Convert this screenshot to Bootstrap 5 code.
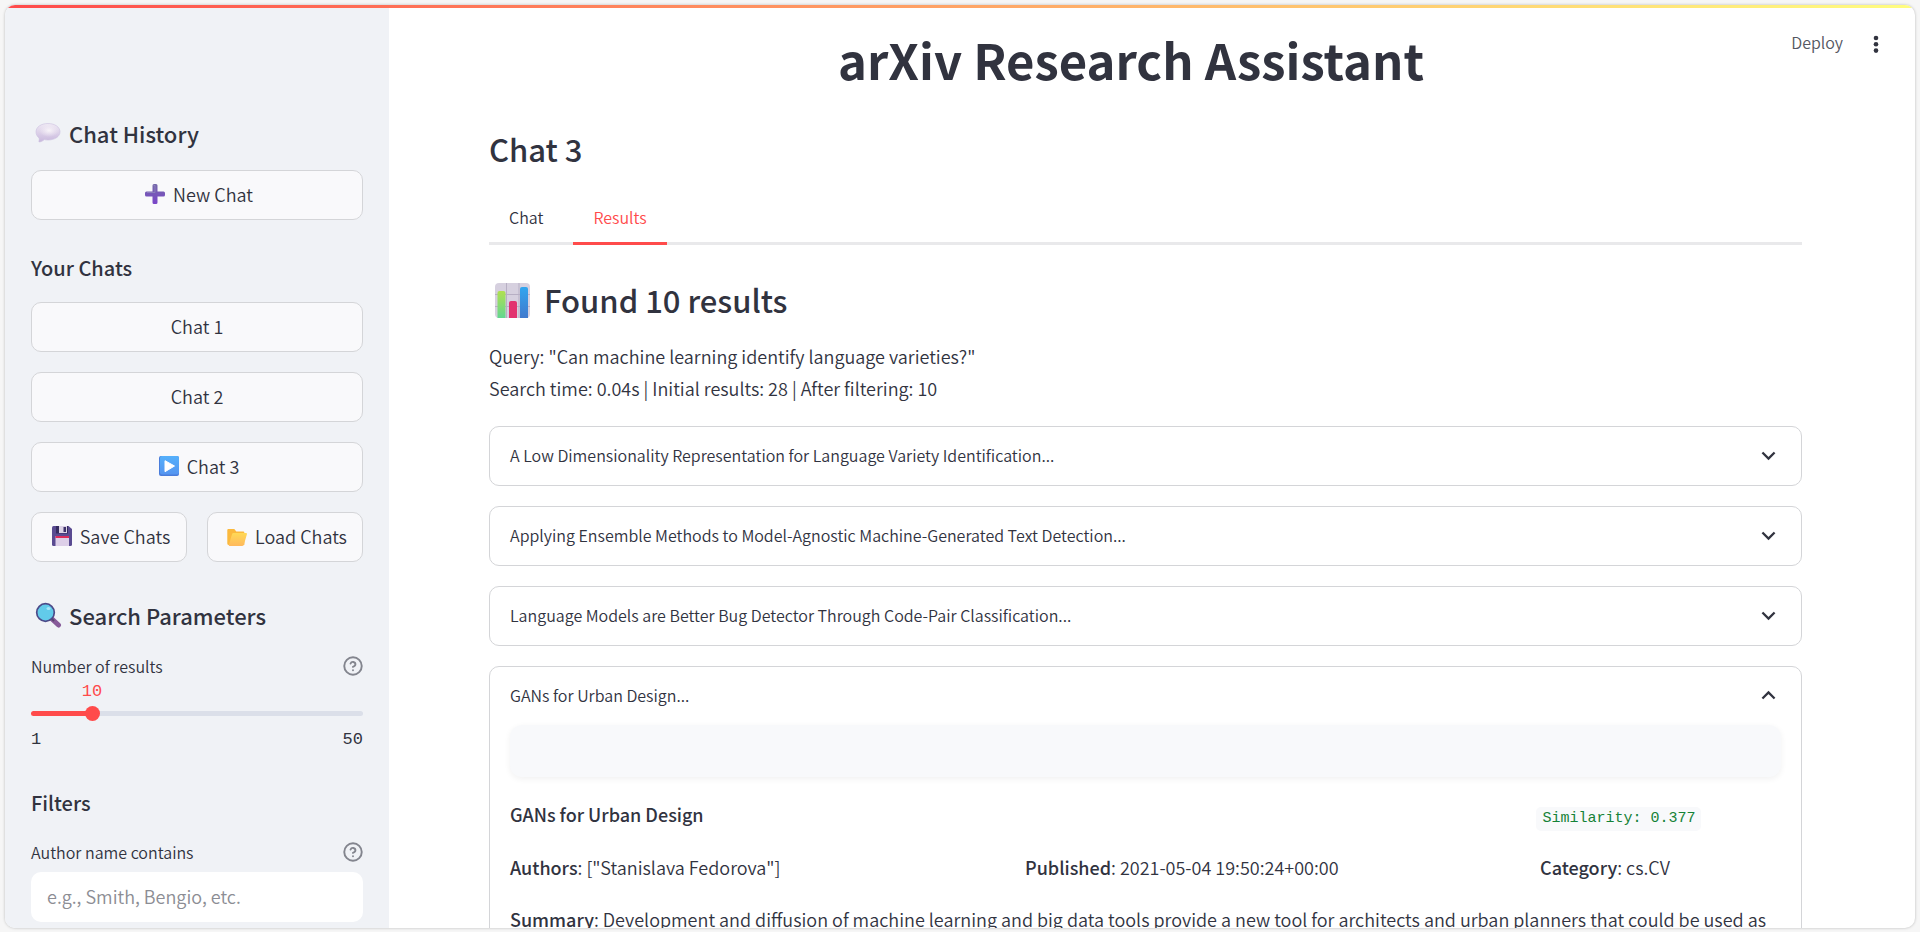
<!DOCTYPE html>
<html lang="en">
<head>
<meta charset="utf-8">
<meta name="viewport" content="width=device-width, initial-scale=1">
<title>arXiv Research Assistant</title>
<link href="https://cdn.jsdelivr.net/npm/bootstrap@5.3.0/dist/css/bootstrap.min.css" rel="stylesheet">
<style>
  :root { --ink: #31333f; --accent: #ff4b4b; --line: #d4d5d8; --side: #f0f2f6; }
  body {
    background: #f6f6f6; color: var(--ink); height: 100vh; padding: 5px 5px 4px; overflow: hidden;
    font-family: "Noto Sans CJK JP", "Noto Sans", sans-serif; font-size: 18px; line-height: 32px; font-weight: 350;
  }
  button, input { font-weight: 350; }
  h1, h2, h3 { margin: 0; font-weight: 500; }
  .mono { font-family: "Liberation Mono", monospace; }
  .frame { height: 100%; border-radius: 10px; overflow: hidden; box-shadow: 0 0 3px rgba(0,0,0,.25); }
  .topline { height: 3px; background: linear-gradient(90deg, #ff4b4b, #fffd80); }
  .sidebar { width: 384px; background: var(--side); padding: 107px 26px 0; overflow: hidden; }
  .sidebar h2 { font-size: 22px; line-height: 36px; gap: 7px; }
  .sidebar h3 { font-size: 20px; line-height: 32px; }
  .side-btn {
    height: 50px; background: #f9f9fb; border: 1px solid var(--line); border-radius: 10px; color: var(--ink);
    font-size: 18px; line-height: 32px; padding: 0 8px 2px; display: flex; align-items: center; justify-content: center;
    gap: 8px; white-space: nowrap;
  }
  .side-btn svg { margin-left: 4px; }
  .side-btn:hover { border-color: var(--accent); color: var(--accent); }
  .tip { border: 0; background: none; padding: 0; line-height: 0; }
  .field-label { font-size: 16px; line-height: 24px; }
  .slider-value { color: var(--accent); font-size: 17px; line-height: 20px; width: 30px; margin-left: calc(var(--at) - 15px); text-align: center; }
  .slider-track {
    height: 5px; border-radius: 3px; margin: 9px 0 8px;
    background: linear-gradient(90deg, var(--accent) var(--at), #dbdfe9 var(--at));
  }
  .slider-track input {
    -webkit-appearance: none; appearance: none; flex: 1; min-width: 0; height: 15px; margin: 0 -7px; background: none;
  }
  .slider-track input::-webkit-slider-thumb {
    -webkit-appearance: none; width: 15px; height: 15px; border-radius: 50%; background: var(--accent);
  }
  .slider-ends { font-size: 17px; line-height: 32px; }
  .author-input { height: 50px; border: 0; border-radius: 10px; padding: 0 16px 2px; font-size: 18px; line-height: 32px; font-weight: 350; }
  .author-input::placeholder { color: #8c8d94; }
  .main { padding: 21px 113px 0 100px; overflow: hidden; }
  .main h1 { font-size: 49px; line-height: 60px; font-weight: 700; padding-right: 29px; }
  .main h2, .main h3 { font-size: 31px; line-height: 40px; }
  .tabs { border-bottom: 3px solid #e9e9eb; margin: 22px 0 35px; gap: 10px; padding-left: 0; }
  .tabs button {
    border: 0; background: none; color: var(--ink); font-size: 16px; line-height: 24px; height: 54px;
    padding: 0 20px; margin-bottom: -3px; border-bottom: 3px solid transparent;
  }
  .tabs button.active { color: var(--accent); border-bottom-color: var(--accent); }
  .paper { border: 1px solid var(--line); border-radius: 10px; }
  .paper-head {
    border: 0; background: none; width: 100%; height: 58px; color: var(--ink); font-size: 16px; line-height: 24px;
    padding: 0 24px 2px 20px; text-align: left;
  }
  .paper-body { padding: 0 20px 20px; }
  .blank-panel { height: 52px; border-radius: 12px; background: #f8f9fb; box-shadow: 0 2px 6px rgba(0,0,0,.06); margin-bottom: 21px; }
  .paper-title { display: grid; grid-template-columns: 4fr 1fr; gap: 48px; }
  .paper-meta { display: grid; grid-template-columns: 2fr 2fr 1fr; gap: 33px; }
  .paper-body b { font-weight: 500; }
  .score { color: #158237; background: #f8f9fb; border-radius: 5px; font-size: 15px; line-height: 24px; padding: 0 6px; }
  .toolbar { top: 17px; right: 29px; gap: 23px; }
  .toolbar button { border: 0; background: none; padding: 0; color: #555762; font-size: 16px; line-height: 40px; }
</style>
<script src="https://cdn.jsdelivr.net/npm/bootstrap@5.3.0/dist/js/bootstrap.bundle.min.js"></script>
</head>
<body>
<svg width="0" height="0" class="position-absolute" aria-hidden="true">
  <defs>
    <linearGradient id="gBubble" x1="0" y1="0" x2="0" y2="1"><stop offset="0" stop-color="#efe9f4"/><stop offset="1" stop-color="#c9b8dd"/></linearGradient>
    <radialGradient id="gShine"><stop offset="0" stop-color="#f8f4f9"/><stop offset="1" stop-color="#f1eaf4" stop-opacity="0"/></radialGradient>
    <linearGradient id="gPlus" x1="0" y1="0" x2="0" y2="1"><stop offset="0" stop-color="#7468a8"/><stop offset="1" stop-color="#7a45c9"/></linearGradient>
    <linearGradient id="gPlay" x1="0" y1="0" x2="0" y2="1"><stop offset="0" stop-color="#55b0fb"/><stop offset="1" stop-color="#5595f0"/></linearGradient>
    <linearGradient id="gFolder" x1="0" y1="0" x2="0" y2="1"><stop offset="0" stop-color="#ffd956"/><stop offset="1" stop-color="#ffb95c"/></linearGradient>
    <linearGradient id="gGreen" x1="0" y1="0" x2="0" y2="1"><stop offset="0" stop-color="#b0e04f"/><stop offset="1" stop-color="#63d691"/></linearGradient>
    <linearGradient id="gBlue" x1="0" y1="0" x2="0" y2="1"><stop offset="0" stop-color="#31a6ef"/><stop offset="1" stop-color="#4179cd"/></linearGradient>
    <symbol id="help" viewBox="0 0 24 24"><g fill="none" stroke="#83858e" stroke-width="2.300" stroke-linecap="round" stroke-linejoin="round"><circle cx="12" cy="12" r="10.500"/><path d="M9.100 9a3 3 0 0 1 5.800 1c0 2-3 3-3 3M12 17h.01"/></g></symbol>
    <symbol id="down" viewBox="0 0 14 14"><path d="M2 4.500l5 5 5-5" fill="none" stroke="#31333f" stroke-width="1.900"/></symbol>
    <symbol id="up" viewBox="0 0 14 14"><path d="M2 9.500l5-5 5 5" fill="none" stroke="#31333f" stroke-width="1.900"/></symbol>
  </defs>
</svg>

<div class="frame d-flex flex-column position-relative bg-white">
  <div class="topline flex-shrink-0"></div>
  <div class="d-flex flex-grow-1 overflow-hidden">

    <aside class="sidebar flex-shrink-0">
      <h2 class="d-flex align-items-center">
        <svg width="31" height="26" viewBox="0 0 31 26" aria-hidden="true"><path d="M17 3.500c6.800 0 12 3.500 12 8.300S23.800 20 17 20c-1.300 0-2.600-.1-3.700-.4-1.700 1.500-3.700 2.400-4.900 2.300-.8-.1-.6-.6-.4-1.200.3-.8.3-1.800.1-2.600C6.200 16.500 5 14.300 5 11.800c0-4.800 5.200-8.300 12-8.300z" fill="url(#gBubble)" stroke="#cbbfdf" stroke-width=".6"/><ellipse cx="18" cy="10.500" rx="10" ry="6.500" fill="url(#gShine)"/></svg>
        Chat History
      </h2>
      <button type="button" class="side-btn w-100" style="margin-top:19px">
        <svg width="20" height="20" viewBox="0 0 20 20" aria-hidden="true"><path d="M9 0h2q1.500 0 1.500 1.500v6h6q1.500 0 1.500 1.500v2q0 1.500-1.500 1.500h-6v6q0 1.500-1.500 1.500H9q-1.500 0-1.500-1.500v-6h-6Q0 12.500 0 11V9q0-1.500 1.500-1.500h6v-6Q7.500 0 9 0z" fill="url(#gPlus)"/><path d="M8.500 1.500h1.500v7h-8" fill="none" stroke="#8f86bf" stroke-width=".8"/></svg>
        New Chat
      </button>
      <h3 style="padding:32px 0 18px">Your Chats</h3>
      <div class="d-grid" style="gap:20px">
        <button type="button" class="side-btn">Chat 1</button>
        <button type="button" class="side-btn">Chat 2</button>
        <button type="button" class="side-btn">
          <svg width="20" height="20" viewBox="0 0 20 20" aria-hidden="true"><rect width="20" height="20" rx="2" fill="#4a7ddb"/><rect x="1" y="0" width="19" height="18.500" rx="2" fill="url(#gPlay)"/><path d="M6 4.700l9.500 5.300L6 15.700z" fill="#fff" stroke="#fff" stroke-width="1" stroke-linejoin="round"/></svg>
          Chat 3
        </button>
        <div class="row g-0" style="column-gap:20px">
          <button type="button" class="side-btn col">
            <svg width="20" height="20" viewBox="0 0 20 20" aria-hidden="true"><path d="M1.500 0h15L20 3v15.500q0 1.500-1.500 1.500h-17Q0 20 0 18.500v-17Q0 0 1.500 0z" fill="#5a4b91"/><path d="M4 0h12v7.500H4z" fill="#352c60"/><path d="M7 0h8v7H7z" fill="#ddd3e6"/><path d="M11.500 1h2.500v5h-2.500z" fill="#3c3168"/><path d="M3.500 10h13.500v10H3.500z" fill="#ddcfe8"/><path d="M3.500 10h13.500v2H3.500z" fill="#dd2c5b"/></svg>
            Save Chats
          </button>
          <button type="button" class="side-btn col">
            <svg width="20" height="20" viewBox="0 0 20 20" aria-hidden="true"><path d="M1.300 3h6l2 2.500h7q1 0 1 1V19H2Q.3 19 .3 17.500V4q0-1 1-1z" fill="#fbb93d"/><path d="M6.500 7H19q1.300 0 .9 1.300l-3 10.400q-.5 1.300-2 1.300H2.500q-1 0-.6-1.300L5 8.200Q5.400 7 6.500 7z" fill="url(#gFolder)"/></svg>
            Load Chats
          </button>
        </div>
      </div>
      <h2 class="d-flex align-items-center" style="margin-top:35px">
        <svg width="31" height="26" viewBox="0 0 31 26" aria-hidden="true"><path d="M21 17l6.500 6" stroke="#875a99" stroke-width="5" stroke-linecap="round"/><path d="M20 16l3 3" stroke="#59456f" stroke-width="2"/><circle cx="14.500" cy="10.500" r="8.800" fill="#62cbea" stroke="#4c4a89" stroke-width="1.700"/><ellipse cx="17.500" cy="6.500" rx="2" ry="1.500" fill="#a6e6fa"/></svg>
        Search Parameters
      </h2>
      <div style="--at:18.367%">
        <div class="d-flex justify-content-between align-items-center field-label" style="margin-top:21px">
          <label for="num">Number of results</label>
          <button class="tip" type="button" aria-label="Help: number of results"><svg width="20" height="20"><use href="#help"/></svg></button>
        </div>
        <div class="slider-value mono mt-1">10</div>
        <div class="slider-track d-flex align-items-center"><input type="range" id="num" min="1" max="50" value="10"></div>
        <div class="slider-ends mono d-flex justify-content-between"><span>1</span><span>50</span></div>
      </div>
      <h3 style="padding:31px 0 21px">Filters</h3>
      <div class="d-flex justify-content-between align-items-center field-label">
        <label for="author">Author name contains</label>
        <button class="tip" type="button" aria-label="Help: author name"><svg width="20" height="20"><use href="#help"/></svg></button>
      </div>
      <input class="author-input form-control mt-2" id="author" type="text" placeholder="e.g., Smith, Bengio, etc.">
    </aside>

    <main class="main flex-grow-1">
      <h1 class="text-center">arXiv Research Assistant</h1>
      <h2 style="margin-top:40px">Chat 3</h2>
      <div class="tabs d-flex" role="tablist">
        <button type="button" role="tab" aria-selected="false">Chat</button>
        <button type="button" role="tab" aria-selected="true" class="active">Results</button>
      </div>
      <h3 class="d-flex align-items-center" style="gap:14px">
        <svg width="41" height="36" viewBox="0 0 41 36" aria-hidden="true"><rect x="6" y="1" width="35" height="35" rx="4" fill="#d6d0df"/><path d="M17.500 1v35M30 1v35M6 12.500h35M6 24.500h35" stroke="#b7afc4" stroke-width="1"/><path d="M8.500 36V11q0-2 2-2h4q2 0 2 2v25z" fill="url(#gGreen)"/><path d="M20 36V21q0-2 2-2h4q2 0 2 2v15z" fill="#e2326f"/><path d="M31 36V7q0-2 2-2h4q2 0 2 2v29z" fill="url(#gBlue)"/></svg>
        Found 10 results
      </h3>
      <p style="margin:20px 0 22px">Query: "Can machine learning identify language varieties?"<br>Search time: 0.04s | Initial results: 28 | After filtering: 10</p>

      <div class="d-grid" style="gap:20px">
        <section class="paper"><button type="button" class="paper-head d-flex align-items-center justify-content-between" aria-expanded="false">A Low Dimensionality Representation for Language Variety Identification...<svg width="17" height="17"><use href="#down"/></svg></button></section>
        <section class="paper"><button type="button" class="paper-head d-flex align-items-center justify-content-between" aria-expanded="false">Applying Ensemble Methods to Model-Agnostic Machine-Generated Text Detection...<svg width="17" height="17"><use href="#down"/></svg></button></section>
        <section class="paper"><button type="button" class="paper-head d-flex align-items-center justify-content-between" aria-expanded="false">Language Models are Better Bug Detector Through Code-Pair Classification...<svg width="17" height="17"><use href="#down"/></svg></button></section>
        <section class="paper">
          <button type="button" class="paper-head d-flex align-items-center justify-content-between" aria-expanded="true">GANs for Urban Design...<svg width="17" height="17"><use href="#up"/></svg></button>
          <div class="paper-body">
            <div class="blank-panel"></div>
            <div class="paper-title"><b>GANs for Urban Design</b><span class="text-nowrap"><code class="score mono d-inline-block">Similarity: 0.377</code></span></div>
            <div class="paper-meta" style="margin:20px 0">
              <span><b>Authors</b>: ["Stanislava Fedorova"]</span>
              <span><b>Published</b>: 2021-05-04 19:50:24+00:00</span>
              <span><b>Category</b>: cs.CV</span>
            </div>
            <p class="mb-0 text-nowrap"><b>Summary</b>: Development and diffusion of machine learning and big data tools provide a new tool for architects and urban planners that could be used as</p>
          </div>
        </section>
      </div>
    </main>
  </div>

  <div class="toolbar position-absolute d-flex align-items-center">
    <button type="button">Deploy</button>
    <button type="button" aria-label="Menu"><svg width="20" height="20" viewBox="0 0 20 20" fill="#31333f"><circle cx="10" cy="3" r="2.300"/><circle cx="10" cy="9.300" r="2.300"/><circle cx="10" cy="15.600" r="2.300"/></svg></button>
  </div>
</div>
</body>
</html>
